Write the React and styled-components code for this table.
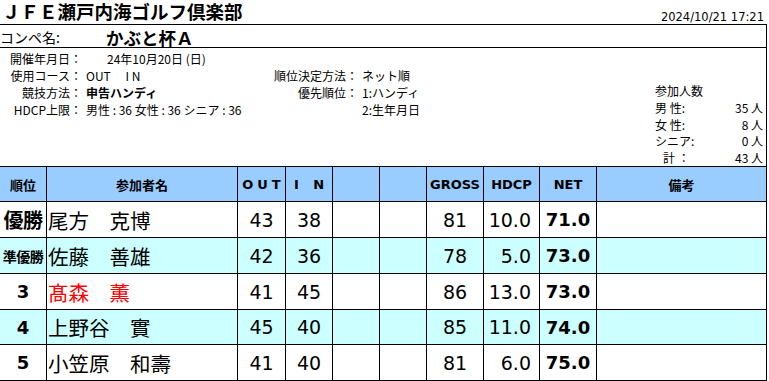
import React from 'react';
import styled, {createGlobalStyle} from 'styled-components';

const GlobalStyle = createGlobalStyle`
    body {
        margin: 0;
        background: #fff;
        color: #000;
        font-family: "Noto Sans CJK JP", "Noto Sans", sans-serif;
    }
`;

const COLS = '47px 191px 48px 47px 47px 47px 57px 56px 57px 170px';
const JP = '"Noto Sans CJK JP", "Noto Sans", sans-serif';
const NUM = '"DejaVu Sans", "Noto Sans CJK JP", sans-serif';

const Page = styled.div`
    width: 767px;
    overflow: hidden;
`;

const TitleBar = styled.div`
    height: 24px;
    display: flex;
    justify-content: space-between;
    align-items: flex-start;
    padding-left: 2px;
    box-sizing: border-box;
`;

const Title = styled.h1`
    margin: 0;
    font-size: 18.5px;
    line-height: 22px;
    font-weight: 700;
`;

const Stamp = styled.div`
    align-self: flex-end;
    font-family: ${NUM};
    font-size: 11.5px;
    line-height: 14px;
    margin-right: 3px;
    margin-bottom: 0px;
`;

const CompeBox = styled.div`
    height: 24px;
    box-sizing: border-box;
    border-top: 1px solid #000;
    border-bottom: 1px solid #000;
    border-right: 1px solid #000;
    display: flex;
    align-items: center;
    padding-top: 2px;
`;

const CompeLabel = styled.span`
    width: 106px;
    font-size: 14px;
`;

const CompeName = styled.span`
    font-size: 17.5px;
    font-weight: 700;
`;

const Info = styled.div`
    height: 118px;
    box-sizing: border-box;
    border-right: 1px solid #000;
    display: flex;
    justify-content: space-between;
`;

const InfoGrid = styled.div`
    display: grid;
    grid-template-columns: 82px 182px 86px auto;
    grid-auto-rows: 17px;
    column-gap: 4px;
    padding-top: 2px;
    font-size: 12px;
    line-height: 17px;
    align-self: flex-start;
`;

const Label = styled.span`
    text-align: right;
    white-space: nowrap;
`;

const Value = styled.span`
    white-space: nowrap;
    font-weight: ${p => (p.$bold ? 700 : 400)};
    padding-left: ${p => p.$indent || 0}px;
`;

const Members = styled.div`
    width: 108px;
    margin-top: 35px;
    margin-right: 3px;
    display: grid;
    grid-template-columns: 1fr auto;
    grid-auto-rows: 16.75px;
    font-size: 12px;
    line-height: 16.75px;
    align-self: flex-start;
`;

const MembersHead = styled.span`
    grid-column: 1 / span 2;
`;

const MemberLabel = styled.span`
    white-space: pre;
    padding-left: ${p => p.$indent || 0}px;
`;

const MemberCount = styled.span`
    text-align: right;
    white-space: pre;
`;

const Table = styled.div`
    border-top: 1px solid #000;
`;

const Row = styled.div`
    display: grid;
    grid-template-columns: ${COLS};
    height: ${p => p.$h}px;
    background: ${p => p.$bg};
`;

const Cell = styled.div`
    box-sizing: border-box;
    border-right: 1px solid #000;
    border-bottom: 1px solid #000;
    display: flex;
    align-items: center;
    justify-content: ${p => p.$align || 'center'};
    padding-right: ${p => p.$pr || 0}px;
    padding-left: ${p => p.$pl || 0}px;
    white-space: nowrap;
    overflow: hidden;
`;

const HeadText = styled.span`
    font-family: ${p => (p.$latin ? NUM : JP)};
    font-size: 13px;
    font-weight: 700;
    letter-spacing: ${p => p.$spacing || 0}px;
    margin-right: ${p => -(p.$spacing || 0)}px;
`;

const Rank = styled.span`
    font-family: ${p => (p.$num ? NUM : JP)};
    font-size: ${p => p.$size}px;
    font-weight: 700;
    letter-spacing: ${p => (p.$num ? 0 : -0.5)}px;
`;

const Name = styled.span`
    font-family: ${JP};
    font-size: 20.5px;
    color: ${p => (p.$red ? '#ff0000' : '#000')};
`;

const Num = styled.span`
    font-family: ${NUM};
    font-size: ${p => (p.$bold ? 18 : 19)}px;
    font-weight: ${p => (p.$bold ? 700 : 400)};
`;

const results = [
    {rank: '優勝', size: 20, name: '尾方　克博', out: 43, in: 38, gross: 81, hdcp: '10.0', net: '71.0'},
    {rank: '準優勝', size: 14, name: '佐藤　善雄', out: 42, in: 36, gross: 78, hdcp: '5.0', net: '73.0'},
    {rank: '3', size: 18, num: true, name: '髙森　薫', red: true, out: 41, in: 45, gross: 86, hdcp: '13.0', net: '73.0'},
    {rank: '4', size: 18, num: true, name: '上野谷　實', out: 45, in: 40, gross: 85, hdcp: '11.0', net: '74.0'},
    {rank: '5', size: 18, num: true, name: '小笠原　和壽', out: 41, in: 40, gross: 81, hdcp: '6.0', net: '75.0'},
];

const heights = [36, 36, 36, 35, 36];

export default function App() {
    return (
        <Page>
            <GlobalStyle />
            <TitleBar>
                <Title>ＪＦＥ瀬戸内海ゴルフ倶楽部</Title>
                <Stamp>2024/10/21 17:21</Stamp>
            </TitleBar>
            <CompeBox>
                <CompeLabel>コンペ名:</CompeLabel>
                <CompeName>かぶと杯Ａ</CompeName>
            </CompeBox>
            <Info>
                <InfoGrid>
                    <Label>開催年月日：</Label>
                    <Value $indent={21}>24年10月20日 (日)</Value>
                    <span />
                    <span />

                    <Label>使用コース：</Label>
                    <Value>OUT　 I N</Value>
                    <Label>順位決定方法：</Label>
                    <Value>ネット順</Value>

                    <Label>競技方法：</Label>
                    <Value $bold>申告ハンディ</Value>
                    <Label>優先順位：</Label>
                    <Value>1:ハンディ</Value>

                    <Label>HDCP上限：</Label>
                    <Value>男性 : 36 女性 : 36 シニア : 36</Value>
                    <span />
                    <Value>2:生年月日</Value>
                </InfoGrid>
                <Members>
                    <MembersHead>参加人数</MembersHead>
                    <MemberLabel>男 性:</MemberLabel>
                    <MemberCount>35 人</MemberCount>
                    <MemberLabel>女 性:</MemberLabel>
                    <MemberCount>8 人</MemberCount>
                    <MemberLabel>シニア:</MemberLabel>
                    <MemberCount>0 人</MemberCount>
                    <MemberLabel $indent={8}>計 ：</MemberLabel>
                    <MemberCount>43 人</MemberCount>
                </Members>
            </Info>
            <Table>
                <Row $h={35} $bg="#99ccff">
                    <Cell><HeadText>順位</HeadText></Cell>
                    <Cell><HeadText>参加者名</HeadText></Cell>
                    <Cell><HeadText $latin $spacing={4}>OUT</HeadText></Cell>
                    <Cell><HeadText $latin $spacing={5}>I N</HeadText></Cell>
                    <Cell />
                    <Cell />
                    <Cell><HeadText $latin>GROSS</HeadText></Cell>
                    <Cell><HeadText $latin>HDCP</HeadText></Cell>
                    <Cell><HeadText $latin>NET</HeadText></Cell>
                    <Cell><HeadText>備考</HeadText></Cell>
                </Row>
                {results.map((r, i) => (
                    <Row key={r.name} $h={heights[i]} $bg={i % 2 ? '#ccffff' : '#ffffff'}>
                        <Cell><Rank $size={r.size} $num={r.num}>{r.rank}</Rank></Cell>
                        <Cell $align="flex-start" $pl={1}><Name $red={r.red}>{r.name}</Name></Cell>
                        <Cell><Num>{r.out}</Num></Cell>
                        <Cell><Num>{r.in}</Num></Cell>
                        <Cell />
                        <Cell />
                        <Cell><Num>{r.gross}</Num></Cell>
                        <Cell $align="flex-end" $pr={8}><Num>{r.hdcp}</Num></Cell>
                        <Cell><Num $bold>{r.net}</Num></Cell>
                        <Cell />
                    </Row>
                ))}
            </Table>
        </Page>
    );
}
